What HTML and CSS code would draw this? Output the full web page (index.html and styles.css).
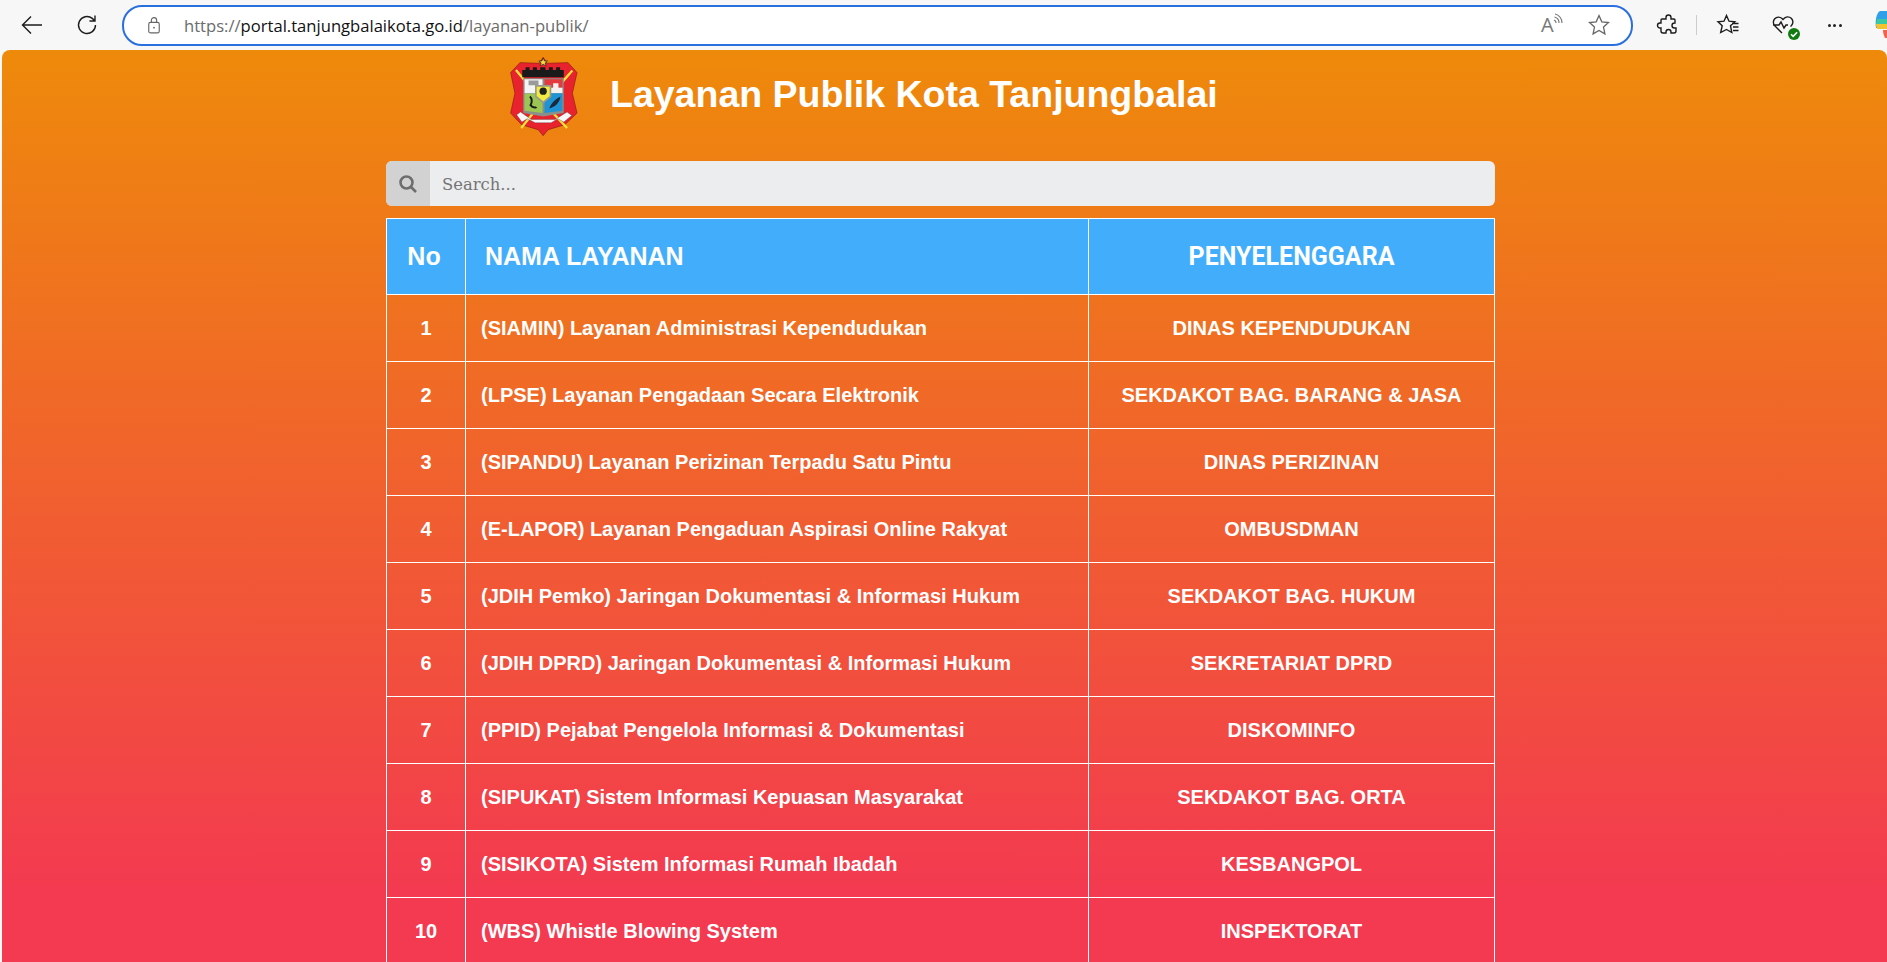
FILE: index.html
```html
<!DOCTYPE html>
<html lang="id">
<head>
    <meta charset="UTF-8">
    <meta name="viewport" content="width=device-width, initial-scale=1.0">
    <title>Layanan Publik Kota Tanjungbalai</title>
    <link rel="stylesheet" href="styles.css">
</head>
<body>
    <!-- browser toolbar -->
    <div class="toolbar">
        <svg class="tool-icon back" viewBox="0 0 24 24"><path d="M22 12H2.500M11 3.500L2.500 12l8.500 8.500"/></svg>
        <svg class="tool-icon reload" viewBox="0 0 24 24"><path d="M20.500 12a8.500 8.500 0 1 1-3.200-6.600L20 8M20 2.500V8h-5.500"/></svg>
        <div class="address-bar">
            <svg class="lock" viewBox="0 0 16 20"><rect x="2" y="7" width="12" height="12" rx="2"/><path d="M5 7V4.500a3 3 0 0 1 6 0V7"/><circle class="dot" cx="8" cy="13" r="1"/></svg>
            <div class="url"><span class="dim">https://</span>portal.tanjungbalaikota.go.id<span class="dim">/layanan-publik/</span></div>
            <div class="read-aloud">A<svg viewBox="0 0 12 12"><path d="M1 7a3 3 0 0 1 2 3M1.500 4a6 6 0 0 1 4.500 6M2 1a9 9 0 0 1 7 9"/></svg></div>
            <svg class="star" viewBox="0 0 24 24"><path d="M12 2.500l2.800 6.300 6.700.7-5 4.600 1.400 6.800L12 17.400l-5.900 3.500 1.400-6.800-5-4.600 6.700-.7z"/></svg>
        </div>
        <svg class="tool-icon ext" viewBox="0 0 24 24"><path d="M10 4.500a2.500 2.500 0 0 1 5 0V6h3a1 1 0 0 1 1 1v3h-.5a2.500 2.500 0 0 0 0 5H20v3a2 2 0 0 1-2 2h-3v-1a2.500 2.500 0 0 0-5 0v1H7a2 2 0 0 1-2-2v-3H4a2.500 2.500 0 0 1 0-5h1V7a1 1 0 0 1 1-1h4z"/></svg>
        <div class="separator"></div>
        <svg class="tool-icon fav" viewBox="0 0 24 24"><path d="M10.500 2.500l2.500 5.700 5.800.6-4.300 3.900 1.300 6.800-5.300-3-5.800 3 1.500-6.800L2 8.800l6-.6zM16 10.500h6.500M17 14h5.500M17 17.500h5.500"/></svg>
        <div class="health">
            <svg class="tool-icon" viewBox="0 0 24 24"><path d="M11 20l-7-7a5 5 0 0 1 7-7.500l1 1 1-1a5 5 0 0 1 7.500 7l-1 1M2 12h6l2-3 3 6 2-3h2"/></svg>
            <span class="health-badge"><svg viewBox="0 0 10 10"><path d="M2.500 5.200l1.800 1.800 3.300-3.500"/></svg></span>
        </div>
        <div class="more"><i></i><i></i><i></i></div>
        <svg class="copilot" viewBox="0 0 12 28">
            <path d="M5 0h7v17H1C0 11 1 2 5 0z" fill="#2f9fe8"/>
            <path d="M2 8h10v5H1z" fill="#3cc8a0"/>
            <path d="M1 13h11v5H3c-1 0-2-2-2-5z" fill="#f2c230"/>
            <path d="M8 19h4v8H10c-1-2-2-5-2-8z" fill="#f0634e"/>
        </svg>
    </div>

    <div class="page">
        <div class="brand">
            <svg class="logo" viewBox="55 15 215 250">
                <path class="logo-shield" d="M90 38L148 40 160 22 172 40 235 38 262 68 248 130 262 190 225 225 175 240 160 258 145 240 95 225 62 190 75 130 62 68z"/>
                <path d="M160 24l4 9h9l-7 6 3 9-9-5-9 5 3-9-7-6h9z" fill="#f5d83a" stroke="#222" stroke-width="2"/>
                <path d="M78 60l30 36M248 62l-30 34M130 190l-36 45M190 190l42 45" stroke="#f2e23c" stroke-width="7"/>
                <path d="M97 82V60h10v-8h12v8h10v-8h12v8h10v-8h16v8h10v-8h12v8h10v-8h12v8h11v22z" fill="#1a1a1a"/>
                <path d="M100 85h122v105l-62 10-60-10z" fill="#8a8f8a"/>
                <path d="M104 88h54v42h-54z" fill="#f4f4f4"/>
                <path d="M116 92h30v14h-30z" fill="#9a9a9a"/>
                <path d="M164 88h54v26h-54z" fill="#e23a3f"/>
                <path d="M190 100h16v14h-16zM164 114h54v16h-54z" fill="#f4f0ee"/>
                <path d="M104 132h54v58l-54-7z" fill="#9cc653"/>
                <path d="M164 130h54v53l-54 7z" fill="#1f93d4"/>
                <path d="M120 140c8 6 6 20 2 26 6 8 16 8 18 6" fill="none" stroke="#1a1a1a" stroke-width="6"/>
                <path d="M178 176c6-16 18-28 34-36-2 18-16 32-34 36z" fill="#1a2a3a"/>
                <path d="M138 108h44v32l-22 18-22-18z" fill="#f3ea42" stroke="#9a9a8a" stroke-width="5"/>
                <circle cx="160" cy="124" r="11" fill="#222"/>
                <path d="M80 195l12-8 32 22 72 0 36-22 14 10-24 20-18-10-20 12h-48l-24-12-16 10z" fill="#f7f7f7" stroke="#333" stroke-width="1"/>
            </svg>
            <h1 class="brand-title">Layanan Publik Kota Tanjungbalai</h1>
        </div>

        <div class="content">
            <div class="search">
                <span class="search-icon"><svg viewBox="0 0 20 20"><circle cx="8.500" cy="8.500" r="6"/><path d="M13 13l5 5"/></svg></span>
                <span class="search-text">Search...</span>
            </div>

            <table class="services">
                <thead>
                    <tr>
                        <th class="col-no">No</th>
                        <th class="col-name">NAMA LAYANAN</th>
                        <th class="col-org">PENYELENGGARA</th>
                    </tr>
                </thead>
                <tbody>
                    <tr><td class="num">1</td><td class="name">(SIAMIN) Layanan Administrasi Kependudukan</td><td class="org">DINAS KEPENDUDUKAN</td></tr>
                    <tr><td class="num">2</td><td class="name">(LPSE) Layanan Pengadaan Secara Elektronik</td><td class="org">SEKDAKOT BAG. BARANG &amp; JASA</td></tr>
                    <tr><td class="num">3</td><td class="name">(SIPANDU) Layanan Perizinan Terpadu Satu Pintu</td><td class="org">DINAS PERIZINAN</td></tr>
                    <tr><td class="num">4</td><td class="name">(E-LAPOR) Layanan Pengaduan Aspirasi Online Rakyat</td><td class="org">OMBUSDMAN</td></tr>
                    <tr><td class="num">5</td><td class="name">(JDIH Pemko) Jaringan Dokumentasi &amp; Informasi Hukum</td><td class="org">SEKDAKOT BAG. HUKUM</td></tr>
                    <tr><td class="num">6</td><td class="name">(JDIH DPRD) Jaringan Dokumentasi &amp; Informasi Hukum</td><td class="org">SEKRETARIAT DPRD</td></tr>
                    <tr><td class="num">7</td><td class="name">(PPID) Pejabat Pengelola Informasi &amp; Dokumentasi</td><td class="org">DISKOMINFO</td></tr>
                    <tr><td class="num">8</td><td class="name">(SIPUKAT) Sistem Informasi Kepuasan Masyarakat</td><td class="org">SEKDAKOT BAG. ORTA</td></tr>
                    <tr><td class="num">9</td><td class="name">(SISIKOTA) Sistem Informasi Rumah Ibadah</td><td class="org">KESBANGPOL</td></tr>
                    <tr><td class="num">10</td><td class="name">(WBS) Whistle Blowing System</td><td class="org">INSPEKTORAT</td></tr>
                </tbody>
            </table>
        </div>
    </div>
</body>
</html>
```

FILE: styles.css
```css
html, body {
    height: 100%;
}
body {
    margin: 0;
    background-color: #f7f7f7;
    font-family: "Liberation Sans", Arial, sans-serif;
    display: flex;
    flex-direction: column;
    overflow: hidden;
}

/* browser toolbar */
.toolbar {
    height: 50px;
    flex-shrink: 0;
    display: flex;
    align-items: center;
    overflow: hidden;
}
.tool-icon {
    width: 24px;
    height: 24px;
    flex-shrink: 0;
    fill: none;
    stroke: #1c1c1c;
    stroke-width: 1.4;
}
.back {
    margin-left: 20px;
}
.reload {
    margin-left: 31px;
}
.address-bar {
    width: 1507px;
    height: 37px;
    flex-shrink: 0;
    margin-left: 23px;
    border: 2px solid #2a6fe0;
    border-radius: 20px;
    background-color: white;
    display: flex;
    align-items: center;
}
.lock {
    width: 14px;
    height: 18px;
    margin-left: 23px;
    fill: none;
    stroke: #666;
    stroke-width: 1.3;
}
.lock .dot {
    fill: #666;
    stroke: none;
}
.url {
    margin-left: 23px;
    flex: 1;
    font-family: "Open Sans", sans-serif;
    font-size: 16.6px;
    color: #111;
}
.dim {
    color: #6b6b6b;
}
.read-aloud {
    position: relative;
    width: 22px;
    font-family: "Open Sans", sans-serif;
    font-size: 20px;
    line-height: 24px;
    color: #777;
}
.read-aloud svg {
    position: absolute;
    top: 0;
    left: 12px;
    width: 12px;
    height: 12px;
    fill: none;
    stroke: #777;
    stroke-width: 1.2;
}
.star {
    width: 24px;
    height: 24px;
    margin-left: 24px;
    margin-right: 20px;
    fill: none;
    stroke: #666;
    stroke-width: 1.3;
}
.ext {
    margin-left: 23px;
}
.separator {
    width: 1px;
    height: 20px;
    margin-left: 16px;
    background-color: #ccc;
}
.fav {
    margin-left: 19px;
}
.health {
    position: relative;
    width: 24px;
    height: 24px;
    margin-left: 31px;
}
.health-badge {
    position: absolute;
    right: -5px;
    bottom: -3px;
    width: 12px;
    height: 12px;
    border-radius: 50%;
    background-color: #107c10;
    display: flex;
}
.health-badge svg {
    width: 12px;
    height: 12px;
    fill: none;
    stroke: white;
    stroke-width: 1.3;
}
.more {
    width: 16px;
    margin-left: 33px;
    display: flex;
    justify-content: space-between;
}
.more i {
    width: 3px;
    height: 3px;
    border-radius: 50%;
    background-color: #222;
}
.copilot {
    width: 12px;
    height: 28px;
    margin-left: 33px;
    flex-shrink: 0;
}

/* page */
.page {
    flex: 1;
    margin-left: 2px;
    border-radius: 8px 8px 0 0;
    background: linear-gradient(#ee8a0a 0%, #f33a50 92%);
    overflow: hidden;
}
.brand {
    display: flex;
    height: 84px;
    margin-left: 506px;
}
.logo {
    width: 72px;
    height: 83px;
    margin-top: 5px;
    flex-shrink: 0;
}
.logo-shield {
    fill: #e8232d;
    stroke: #8a1c1c;
    stroke-width: 2;
}
.brand-title {
    margin: 2px 0 0 30px;
    font-size: 37.5px;
    line-height: 84px;
    font-weight: bold;
    color: white;
}
.content {
    width: 1109px;
    margin: 27px 0 0 384px;
}
.search {
    height: 45px;
    display: flex;
    border-radius: 6px;
    overflow: hidden;
    background-color: #ecedef;
}
.search-icon {
    width: 44px;
    background-color: #d2d2d2;
    display: flex;
    align-items: center;
    justify-content: center;
}
.search-icon svg {
    width: 20px;
    height: 20px;
    fill: none;
    stroke: #6e6e6e;
    stroke-width: 2.6;
}
.search-text {
    margin-left: 12px;
    font-family: "DejaVu Serif", serif;
    font-size: 16.4px;
    line-height: 47px;
    color: #757575;
}
.services {
    width: 1109px;
    margin-top: 12px;
    border-collapse: collapse;
    table-layout: fixed;
    color: white;
}
.services th, .services td {
    border: 1px solid white;
    padding: 0;
}
.services thead tr {
    background-color: #42aefb;
    height: 76px;
}
.services th {
    font-size: 25px;
    font-weight: bold;
}
.col-no {
    width: 79px;
    padding-right: 4px !important;
    box-sizing: border-box;
}
.col-name {
    width: 603px;
    text-align: left;
    padding-left: 19px !important;
}
.col-org {
    font-family: "Roboto", sans-serif;
}
.services tbody tr {
    height: 67px;
}
.services td {
    font-size: 20px;
    font-weight: bold;
}
.num, .org {
    text-align: center;
}
.name {
    padding-left: 15px !important;
}
```
